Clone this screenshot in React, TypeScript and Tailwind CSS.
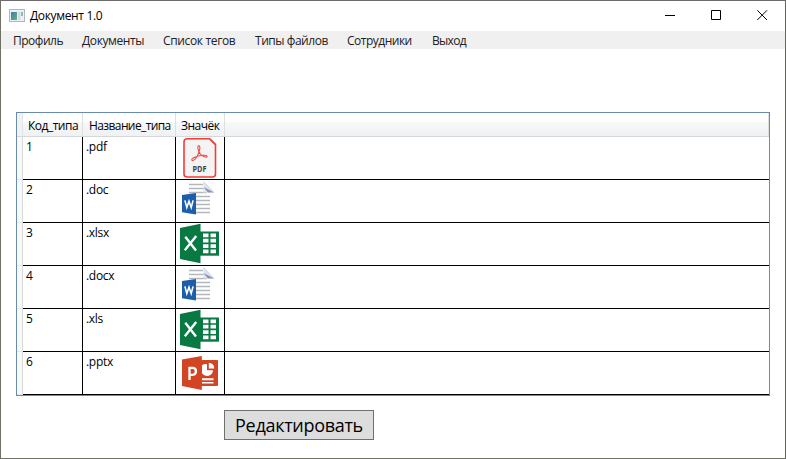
import React from "react";

const menu = [
  { label: "Профиль", box: "w-[69px] tracking-[-0.5px]" },
  { label: "Документы", box: "w-[81px] tracking-[-0.4px]" },
  { label: "Список тегов", box: "w-[92px] tracking-[-0.35px]" },
  { label: "Типы файлов", box: "w-[92px] tracking-[-0.45px]" },
  { label: "Сотрудники", box: "w-[85px] tracking-[-0.5px]" },
  { label: "Выход", box: "w-[60px] tracking-[-0.7px]" },
];

function PdfIcon() {
  return (
    <svg width="48" height="42" viewBox="0 0 48 42">
      <path d="M11 1.7h22.5l6 6V37a3 3 0 0 1-3 3H11a3 3 0 0 1-3-3V4.7a3 3 0 0 1 3-3z" fill="#f4f4f4" stroke="#f43b36" strokeWidth="1.6" />
      <path d="M33 1.7l6.5 6.5V6.6l-4.8-4.9z" fill="#f43b36" />
      <path d="M22.3 8.7c2-.4 2 2.8.7 6.2-1.3 3.6-3.7 7.6-5.6 8.4-2 .7-2.4-1-.2-2.3 3.2-1.9 7.8-3 11.5-2.7 3.4.3 3.1 2.4.4 1.7-3.4-1-6.4-4.5-7.1-8.1-.2-1.3-.3-2.9.3-3.2z" fill="none" stroke="#f04a43" strokeWidth="1.1" />
      <text x="16.5" y="35" fontSize="8.6" fontWeight="700" fontFamily="Open Sans, sans-serif" fill="#444" textLength="14" lengthAdjust="spacingAndGlyphs">PDF</text>
    </svg>
  );
}

function WordIcon() {
  return (
    <svg width="48" height="42" viewBox="0 0 48 42">
      <path d="M13 4.5h14M13 8.5h15M13 12.5h18M13 16.5h21M13 20.5h21M13 24.5h21M13 28.5h21M13 32.5h21" stroke="#b3b6ba" strokeWidth="1.5" />
      <path d="M27.5 1.5l10.5 11H27.5z" fill="#dfe3ea" />
      <path d="M27.5 7l10.5 5.5H32z" fill="#8594b3" />
      <path d="M27.5 1.5l10.5 11" fill="none" stroke="#b6bfce" strokeWidth=".6" />
      <path d="M6 15l14-2v21.5L6 32.3z" fill="#1c5eaa" />
      <path d="M8.9 20.4l1.9 7.2 2.2-6.4 2.2 6.4 1.9-7.2" fill="none" stroke="#fff" strokeWidth="1.6" />
    </svg>
  );
}

function ExcelIcon() {
  return (
    <svg width="48" height="42" viewBox="0 0 48 42">
      <path d="M4 5L24.5.7v39.6L4 36z" fill="#087943" />
      <path d="M24 8.5h19v24.2H24z" fill="#087943" />
      <path d="M27 10.5h5.5v3.8H27zm7.5 0h5.5v3.8h-5.5zM27 15.8h5.5v3.8H27zm7.5 0h5.5v3.8h-5.5zM27 21.2h5.5v3.8H27zm7.5 0h5.5v3.8h-5.5zM27 26.5h5.5v3.8H27zm7.5 0h5.5v3.8h-5.5z" fill="#fff" />
      <path d="M9.3 13.8L20 27.6M20.2 13L8.8 27.2" fill="none" stroke="#fff" strokeWidth="2.4" />
    </svg>
  );
}

function PowerPointIcon() {
  return (
    <svg width="48" height="42" viewBox="0 0 48 42">
      <path d="M6 7.5L25.8 4v34L6 34z" fill="#d14424" />
      <rect x="25" y="8" width="17" height="26" rx="1" fill="#d14424" />
      <path d="M13.5 28V15.9h3.2c4.3 0 4.3 6.9 0 6.9h-3.2" fill="none" stroke="#fff" strokeWidth="2.3" />
      <path d="M31 12.3v6h6a6 6 0 0 1-11 3v-8a6 6 0 0 1 5-1zM32.8 10.8a6 6 0 0 1 5.5 5.7h-5.5zM26 26.3h11.5v1.9H26zM26 30h11.5v1.6H26z" fill="#fff" />
    </svg>
  );
}

const rows = [
  { id: 1, ext: ".pdf", Icon: PdfIcon },
  { id: 2, ext: ".doc", Icon: WordIcon },
  { id: 3, ext: ".xlsx", Icon: ExcelIcon },
  { id: 4, ext: ".docx", Icon: WordIcon },
  { id: 5, ext: ".xls", Icon: ExcelIcon },
  { id: 6, ext: ".pptx", Icon: PowerPointIcon },
];

function TitleBar() {
  return (
    <header className="flex h-[30px] items-center bg-white">
      <svg className="ml-2 shrink-0" width="16" height="14" viewBox="0 0 16 14">
        <defs>
          <linearGradient id="pane" x1="0" y1="0" x2="1" y2="1">
            <stop offset="0" stopColor="#4779a0" />
            <stop offset="1" stopColor="#62b48a" />
          </linearGradient>
        </defs>
        <rect x=".5" y=".5" width="15" height="12" fill="#edf0f2" stroke="#b2b7bb" />
        <rect x="2" y="3" width="6" height="8" fill="url(#pane)" />
        <rect x="9" y="3" width="2.5" height="8" fill="#d2dde3" />
        <rect x="12" y="3" width="2" height="4" fill="#93bca7" />
      </svg>
      <h1 className="ml-[5px] text-[12px] leading-4 tracking-[-0.35px] whitespace-nowrap text-black">Документ 1.0</h1>
      <div className="ml-auto flex h-full">
        {["M0 5.5h10", "M.5.5h9v9h-9z", "M.3.3l9.7 9.7M10 .3L.3 10"].map((d) => (
          <div key={d} className="flex w-[46px] items-center justify-center pb-px pl-px">
            <svg width="11" height="11" viewBox="0 0 11 11">
              <path d={d} fill="none" stroke="#000" />
            </svg>
          </div>
        ))}
      </div>
    </header>
  );
}

export default function App() {
  return (
    <div className="flex h-[459px] w-[786px] flex-col overflow-hidden border border-[#6c6a6c] border-r-[#656660] border-b-[#70736a] border-l-[#707164] bg-white font-['Open_Sans','Noto_Sans',sans-serif] text-[12px] text-black">
      <TitleBar />
      <nav className="flex h-[18px] shrink-0 items-center bg-[#f0f0f0] pl-3 text-[#212121]">
        {menu.map((m) => (
          <div key={m.label} className={`${m.box} shrink-0 pt-[2px] leading-4 whitespace-nowrap`}>{m.label}</div>
        ))}
      </nav>
      <main className="flex flex-col pt-[63px] pl-[15px]">
        <section className="h-[284px] w-[754px] border border-[#688caf]">
          <div className="flex h-6 border-b border-[#d5d7d9] bg-[linear-gradient(#fff_0_38%,#f7f8fa_40%,#f0f1f3_100%)] leading-[26px] whitespace-nowrap">
            <div className="w-[6px] shrink-0 border-r border-[#e5e5e5] bg-[#f1f2f4]" />
            <div className="w-[60px] shrink-0 border-r border-[#dedfe1] pl-[5px] tracking-[-0.5px]">Код_типа</div>
            <div className="w-[93px] shrink-0 border-r border-[#dedfe1] pl-[6px] tracking-[-0.6px]">Название_типа</div>
            <div className="w-[49px] shrink-0 border-r border-[#dedfe1] pl-[5px] tracking-[-0.5px]">Значёк</div>
            <div className="flex-1 border-r border-[#dedfe1]" />
          </div>
          {rows.map(({ id, ext, Icon }) => (
            <div key={id} className="flex h-[43px]">
              <div className="w-[6px] shrink-0 border-r border-b border-[#d7d8da] border-b-[#e4e5e7] bg-[#f9f9fa]" />
              <div className="flex flex-1 border-b border-black">
                <div className="w-[60px] border-r border-black pt-[2px] pl-[3px] leading-4">{id}</div>
                <div className="w-[93px] border-r border-black pt-[2px] pl-[3px] leading-4 tracking-[-0.3px]">{ext}</div>
                <div className="w-[49px] border-r border-black"><Icon /></div>
              </div>
            </div>
          ))}
        </section>
        <button className="mt-[14px] ml-[208px] flex h-[30px] w-[150px] items-center justify-center border border-[#707070] bg-[#ddd] text-[18px] leading-6 tracking-[-0.3px] whitespace-nowrap">Редактировать</button>
      </main>
    </div>
  );
}
